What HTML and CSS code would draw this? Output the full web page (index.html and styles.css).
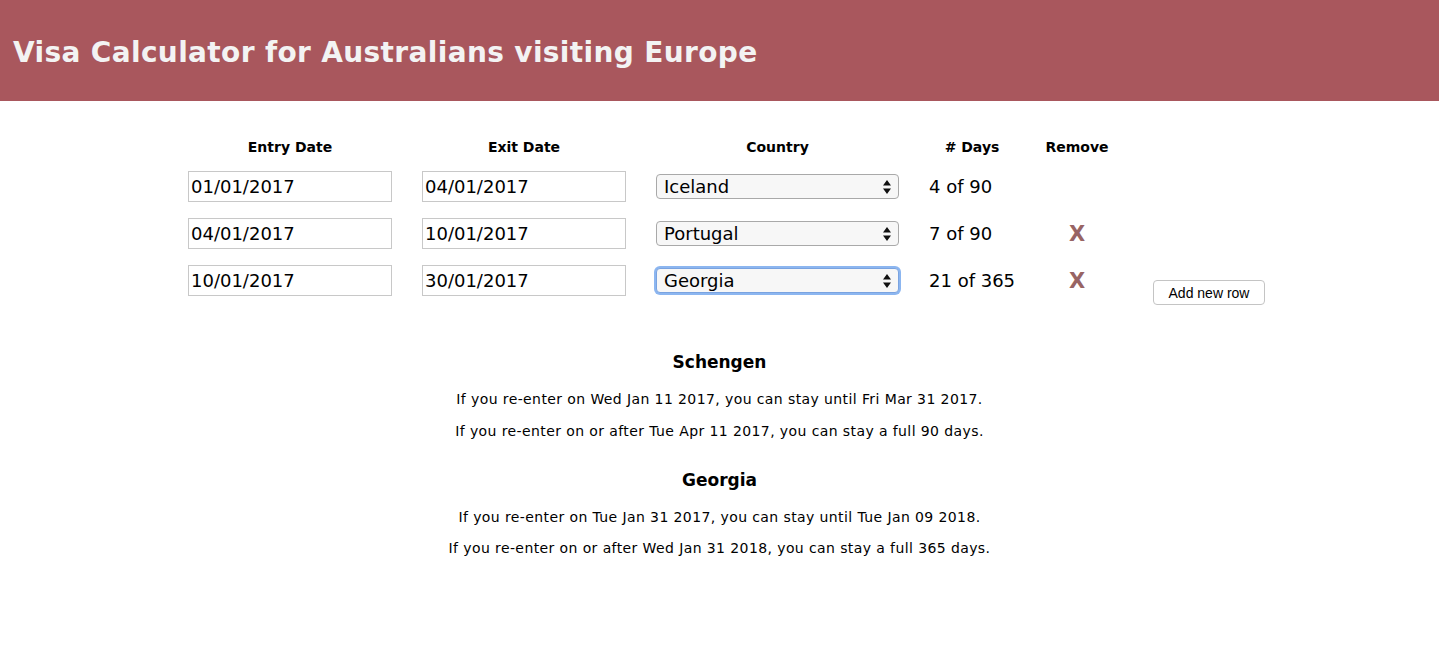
FILE: index.html
```html
<!DOCTYPE html>
<html>
<head>
<meta charset="utf-8">
<title>Visa Calculator</title>
<link rel="stylesheet" href="styles.css">
</head>
<body>
<header class="topbar">
  <h1 class="title">Visa Calculator for Australians visiting Europe</h1>
</header>
<main class="main">
  <div class="trips">
    <div class="th">Entry Date</div>
    <div class="th">Exit Date</div>
    <div class="th">Country</div>
    <div class="th"># Days</div>
    <div class="th">Remove</div>
    <div class="th"></div>

    <input class="date" type="text" value="01/01/2017">
    <input class="date" type="text" value="04/01/2017">
    <div class="sel"><span class="sel-text">Iceland</span><svg class="arrows" width="8" height="14" viewBox="0 0 8 14"><path d="M4 0 L8 5.5 L0 5.5 Z M4 14 L8 8.5 L0 8.5 Z" fill="#111"/></svg></div>
    <div class="days">4 of 90</div>
    <div class="rm"></div>
    <div></div>

    <input class="date" type="text" value="04/01/2017">
    <input class="date" type="text" value="10/01/2017">
    <div class="sel"><span class="sel-text">Portugal</span><svg class="arrows" width="8" height="14" viewBox="0 0 8 14"><path d="M4 0 L8 5.5 L0 5.5 Z M4 14 L8 8.5 L0 8.5 Z" fill="#111"/></svg></div>
    <div class="days">7 of 90</div>
    <div class="rm">X</div>
    <div></div>

    <input class="date" type="text" value="10/01/2017">
    <input class="date" type="text" value="30/01/2017">
    <div class="sel focus"><span class="sel-text">Georgia</span><svg class="arrows" width="8" height="14" viewBox="0 0 8 14"><path d="M4 0 L8 5.5 L0 5.5 Z M4 14 L8 8.5 L0 8.5 Z" fill="#111"/></svg></div>
    <div class="days">21 of 365</div>
    <div class="rm">X</div>
    <div class="addcell"><button class="add" type="button">Add new row</button></div>
  </div>

  <section class="result">
    <h2 class="zone">Schengen</h2>
    <p class="line">If you re-enter on Wed Jan 11 2017, you can stay until Fri Mar 31 2017.</p>
    <p class="line">If you re-enter on or after Tue Apr 11 2017, you can stay a full 90 days.</p>
  </section>
  <section class="result">
    <h2 class="zone">Georgia</h2>
    <p class="line">If you re-enter on Tue Jan 31 2017, you can stay until Tue Jan 09 2018.</p>
    <p class="line">If you re-enter on or after Wed Jan 31 2018, you can stay a full 365 days.</p>
  </section>
</main>
</body>
</html>
```

FILE: styles.css
```css
html, body {
  margin: 0;
  padding: 0;
  background: #ffffff;
}
body {
  font-family: "DejaVu Sans", Verdana, sans-serif;
  color: #000;
}
.topbar {
  background: #a9575d;
  height: 101px;
  display: flex;
  align-items: center;
  padding-left: 13px;
}
.title {
  margin: 0;
  color: #f3f3f3;
  font-family: "DejaVu Sans", Verdana, sans-serif;
  font-weight: bold;
  font-size: 28px;
  letter-spacing: 0.35px;
  padding-top: 3px;
}
.main {
  padding-top: 37px;
}
.trips {
  display: grid;
  grid-template-columns: 204px 204px 243px 86px 64px 126px;
  column-gap: 30px;
  justify-content: center;
  align-items: center;
  padding-left: 14px;
}
.th {
  font-weight: bold;
  font-size: 14px;
  text-align: center;
  height: 18px;
  line-height: 18px;
  margin-bottom: 15px;
}
.date {
  box-sizing: border-box;
  width: 204px;
  height: 31px;
  border: 1px solid #c8c8c8;
  padding: 0 2px;
  font-family: "DejaVu Sans", Verdana, sans-serif;
  font-size: 18px;
  color: #000;
  margin-bottom: 16px;
  outline: none;
}
.sel {
  position: relative;
  box-sizing: border-box;
  height: 25px;
  width: 243px;
  border: 1px solid #a9a9a9;
  border-radius: 4px;
  background: #f7f7f7;
  display: flex;
  align-items: center;
  padding-left: 7px;
  font-size: 18px;
  margin-bottom: 16px;
}
.sel.focus {
  box-shadow: 0 0 0 2px #8cb6f0;
  border-color: #7aa3e0;
}
.arrows {
  position: absolute;
  right: 7px;
  top: 5px;
}
.days {
  font-size: 18px;
  white-space: nowrap;
  margin-bottom: 16px;
}
.rm {
  text-align: center;
  font-weight: bold;
  font-size: 21px;
  color: #986464;
  margin-bottom: 16px;
}
.addcell {
  align-self: start;
  padding-top: 15px;
  padding-left: 14px;
}
.add {
  box-sizing: border-box;
  width: 112px;
  height: 25px;
  background: #fff;
  border: 1px solid #c4c4c4;
  border-radius: 4px;
  font-family: "Liberation Sans", Arial, sans-serif;
  font-size: 14px;
  color: #000;
  padding: 0;
}
.result {
  text-align: center;
}
.result:first-of-type {
  margin-top: 39px;
}
.zone {
  font-size: 17px;
  font-weight: bold;
  margin: 0 0 18px;
  line-height: 22px;
}
.line {
  font-size: 14px;
  letter-spacing: 0.4px;
  margin: 0 0 14.5px;
  line-height: 17px;
}
.result + .result {
  margin-top: 29px;
}
```
